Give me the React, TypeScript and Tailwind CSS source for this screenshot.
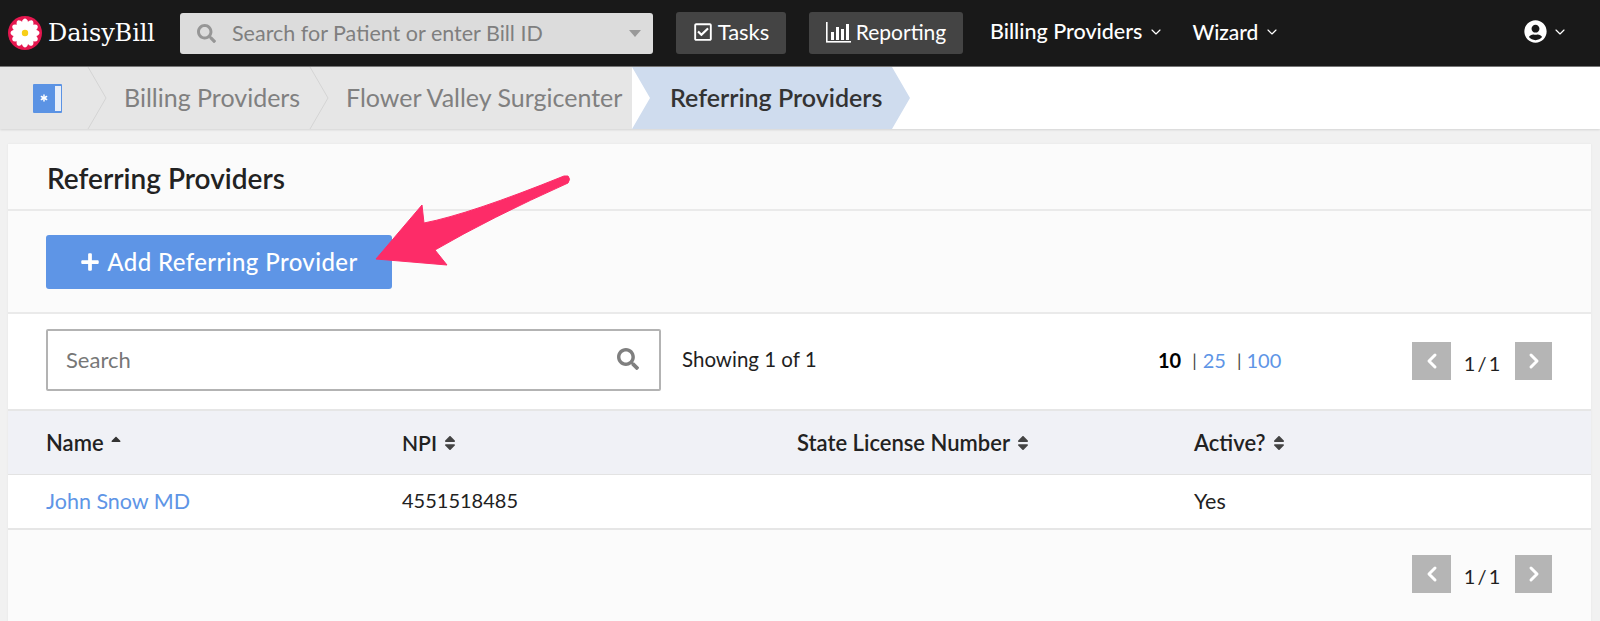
import { Asterisk, ChevronDown, ChevronLeft, ChevronRight } from 'lucide-react'
import { FaPlus, FaRegCheckSquare, FaSearch, FaSort, FaSortUp, FaUserCircle } from 'react-icons/fa'

const PETALS = [0, 30, 60, 90, 120, 150, 180, 210, 240, 270, 300, 330]

function Logo() {
  return (
    <svg viewBox="0 0 34 34" className="h-[34px] w-[34px] shrink-0">
      <circle cx="17" cy="17" r="17" fill="#e5174f" />
      {PETALS.map((a) => (
        <ellipse key={a} cx="17" cy="8.5" rx="3.4" ry="6" fill="#ffffff" transform={`rotate(${a} 17 17)`} />
      ))}
      <circle cx="17" cy="17" r="3.2" fill="#f7cf17" />
    </svg>
  )
}

function ChartIcon() {
  return (
    <svg viewBox="0 0 25 22" className="h-[22px] w-[25px]" fill="#ffffff">
      <rect x="0" y="20" width="25" height="1.6" />
      <rect x="0" y="1" width="1.6" height="20" />
      <rect x="5" y="11" width="3" height="8" />
      <rect x="10" y="6" width="3" height="13" />
      <rect x="15" y="8" width="3" height="11" />
      <rect x="20" y="3" width="3" height="16" />
    </svg>
  )
}

function Separator() {
  return (
    <svg viewBox="0 0 20 62" className="h-[62px] w-[20px] shrink-0" fill="none" stroke="#d4d4d4" strokeWidth="1">
      <path d="M1 0 L19 31 L1 62" />
    </svg>
  )
}

function Pager() {
  return (
    <div className="flex items-center text-[20px] text-[#1f1f1f]">
      <span className="flex h-[38px] w-[39px] items-center justify-center bg-[#b5b5b5]">
        <ChevronLeft className="h-[24px] w-[24px] text-white" strokeWidth={3} />
      </span>
      <span className="w-[62px] pt-[3px] text-center [word-spacing:-3px]">1 / 1</span>
      <span className="ml-[2px] flex h-[38px] w-[37px] items-center justify-center bg-[#b5b5b5]">
        <ChevronRight className="h-[24px] w-[24px] text-white" strokeWidth={3} />
      </span>
    </div>
  )
}

export default function App() {
  return (
    <div className="relative h-[621px] w-[1600px] overflow-hidden bg-[#f1f1f1] font-['Lato',sans-serif] text-[#222222]">
      {/* top bar */}
      <header className="flex h-[67px] items-center border-b border-[#777777] bg-[#191919] text-white">
        <div className="ml-[8px] flex w-[172px] items-center gap-[6px]">
          <Logo />
          <span className="font-['DejaVu_Serif',serif] text-[24px] tracking-[-0.1px]">DaisyBill</span>
        </div>
        <div className="flex h-[41px] w-[473px] items-center rounded-[3px] bg-[#dcdcdc] pl-[17px] pr-[12px] text-[21.5px] text-[#7f7f7f]">
          <FaSearch className="h-[19px] w-[19px] text-[#969696]" />
          <span className="ml-[16px] flex-1">Search for Patient or enter Bill ID</span>
          <span className="h-0 w-0 border-x-[6px] border-t-[7px] border-x-transparent border-t-[#999999]" />
        </div>
        <div className="ml-[23px] flex h-[42px] w-[110px] items-center justify-center gap-[5px] rounded-[3px] bg-[#444444] pb-[3px] text-[22px]">
          <FaRegCheckSquare className="h-[20px] w-[20px]" />
          <span>Tasks</span>
        </div>
        <div className="ml-[23px] flex h-[42px] w-[154px] items-center justify-center gap-[5px] rounded-[3px] bg-[#444444] pb-[3px] text-[21px]">
          <ChartIcon />
          <span>Reporting</span>
        </div>
        <div className="ml-[27px] flex items-center gap-[6px] pb-[3px] text-[21.5px] font-medium">
          <span>Billing Providers</span>
          <ChevronDown className="h-[16px] w-[16px]" strokeWidth={1.75} />
        </div>
        <div className="ml-[28px] flex items-center gap-[6px] pb-[3px] text-[21px] font-medium">
          <span>Wizard</span>
          <ChevronDown className="h-[16px] w-[16px]" strokeWidth={1.75} />
        </div>
        <div className="ml-auto mr-[32px] flex items-center gap-[5px] pb-[3px]">
          <FaUserCircle className="h-[23px] w-[23px]" />
          <ChevronDown className="h-[16px] w-[16px]" strokeWidth={1.75} />
        </div>
      </header>

      {/* breadcrumb */}
      <nav className="flex h-[62px] items-center bg-white text-[25px] shadow-[0_1px_2px_rgba(0,0,0,0.12)]">
        <div className="flex h-full w-[632px] items-center bg-[#e6e6e6] text-[#808080]">
          <div className="ml-[33px] flex h-[29px] w-[29px] items-center rounded-[1px] bg-[#5b93e4] pl-[5px] text-white">
            <Asterisk className="h-[12px] w-[12px]" strokeWidth={3} />
            <span className="ml-auto mr-[1px] h-[25px] w-[6px] bg-[#e8eef8]" />
          </div>
          <div className="ml-[25px]">
            <Separator />
          </div>
          <span className="ml-[17px] w-[185px] whitespace-nowrap">Billing Providers</span>
          <Separator />
          <span className="ml-[17px] whitespace-nowrap">Flower Valley Surgicenter</span>
        </div>
        <div className="flex h-full w-[278px] items-center whitespace-nowrap bg-[#cfdcee] pl-[38px] font-semibold text-[#333333] [clip-path:polygon(0_0,260px_0,100%_50%,260px_100%,0_100%,18px_50%)]">
          Referring Providers
        </div>
      </nav>

      {/* card */}
      <main className="ml-[8px] mt-[15px] w-[1583px] bg-[#fbfbfb] shadow-[0_0_2px_rgba(0,0,0,0.06)]">
        <div className="flex h-[67px] items-center border-b-2 border-[#eaeaea] pl-[39px] pt-[3px] text-[28px] font-semibold">
          Referring Providers
        </div>
        <div className="flex h-[103px] items-start border-b-2 border-[#eaeaea] pl-[38px] pt-[24px]">
          <button className="flex h-[54px] w-[346px] items-center justify-center gap-[7px] rounded-[3px] bg-[#5e95e6] text-[24px] font-medium tracking-[0.4px] text-white">
            <FaPlus className="h-[20px] w-[20px]" />
            <span>Add Referring Provider</span>
          </button>
        </div>
        <div className="flex h-[97px] items-start border-b-2 border-[#e6e6e6] bg-white pl-[38px] pt-[15px]">
          <div className="flex h-[62px] w-[615px] items-center justify-between rounded-[2px] border-2 border-[#b3b3b3] bg-white pl-[18px] pr-[20px] pb-[2px] text-[22px] text-[#777777]">
            <span>Search</span>
            <FaSearch className="h-[22px] w-[22px] text-[#7f7f7f]" />
          </div>
          <span className="ml-[21px] mt-[15px] w-[476px] text-[20.5px] text-[#1f1f1f]">Showing 1 of 1</span>
          <div className="mt-[16px] flex w-[254px] items-center text-[20px] text-[#5e95e6]">
            <span className="font-bold text-black">10</span>
            <span className="ml-[11px] text-[18px] text-[#444444]">|</span>
            <span className="ml-[6px]">25</span>
            <span className="ml-[11px] text-[18px] text-[#444444]">|</span>
            <span className="ml-[5px]">100</span>
          </div>
          <div className="mt-[13px]">
            <Pager />
          </div>
        </div>
        <div className="grid h-[64px] grid-cols-[356px_395px_397px_1fr] items-center border-b border-[#e3e3e3] bg-[#f0f1f6] pl-[38px] text-[22px] font-semibold">
          <div className="flex items-center gap-[4px]">
            Name <FaSortUp className="h-[16px] w-[16px] text-[#333333]" />
          </div>
          <div className="flex items-center gap-[4px] text-[21px]">
            NPI <FaSort className="h-[18px] w-[18px] text-[#444444]" />
          </div>
          <div className="flex items-center gap-[4px]">
            State License Number <FaSort className="h-[18px] w-[18px] text-[#444444]" />
          </div>
          <div className="flex items-center gap-[4px]">
            Active? <FaSort className="h-[18px] w-[18px] text-[#444444]" />
          </div>
        </div>
        <div className="grid h-[55px] grid-cols-[356px_395px_397px_1fr] items-center border-b-2 border-[#e6e6e6] bg-white pl-[38px] text-[20px]">
          <span className="text-[21.5px] text-[#5e95e6]">John Snow MD</span>
          <span className="pb-[4px]">4551518485</span>
          <span />
          <span className="text-[21.5px]">Yes</span>
        </div>
        <div className="flex h-[92px] items-start justify-end pr-[39px] pt-[25px]">
          <Pager />
        </div>
      </main>

      {/* annotation arrow */}
      <svg className="pointer-events-none absolute left-0 top-0 h-[621px] w-[1600px]" viewBox="0 0 1600 621">
        <path
          d="M568 176 Q571 179 568 183 Q490 218 435 250 L447 265 L376 259 L422 205 L424 223 Q470 214 564 176 Z"
          fill="#fd2c68"
          stroke="#fd2c68"
          strokeWidth="1"
          strokeLinejoin="round"
        />
      </svg>
    </div>
  )
}
